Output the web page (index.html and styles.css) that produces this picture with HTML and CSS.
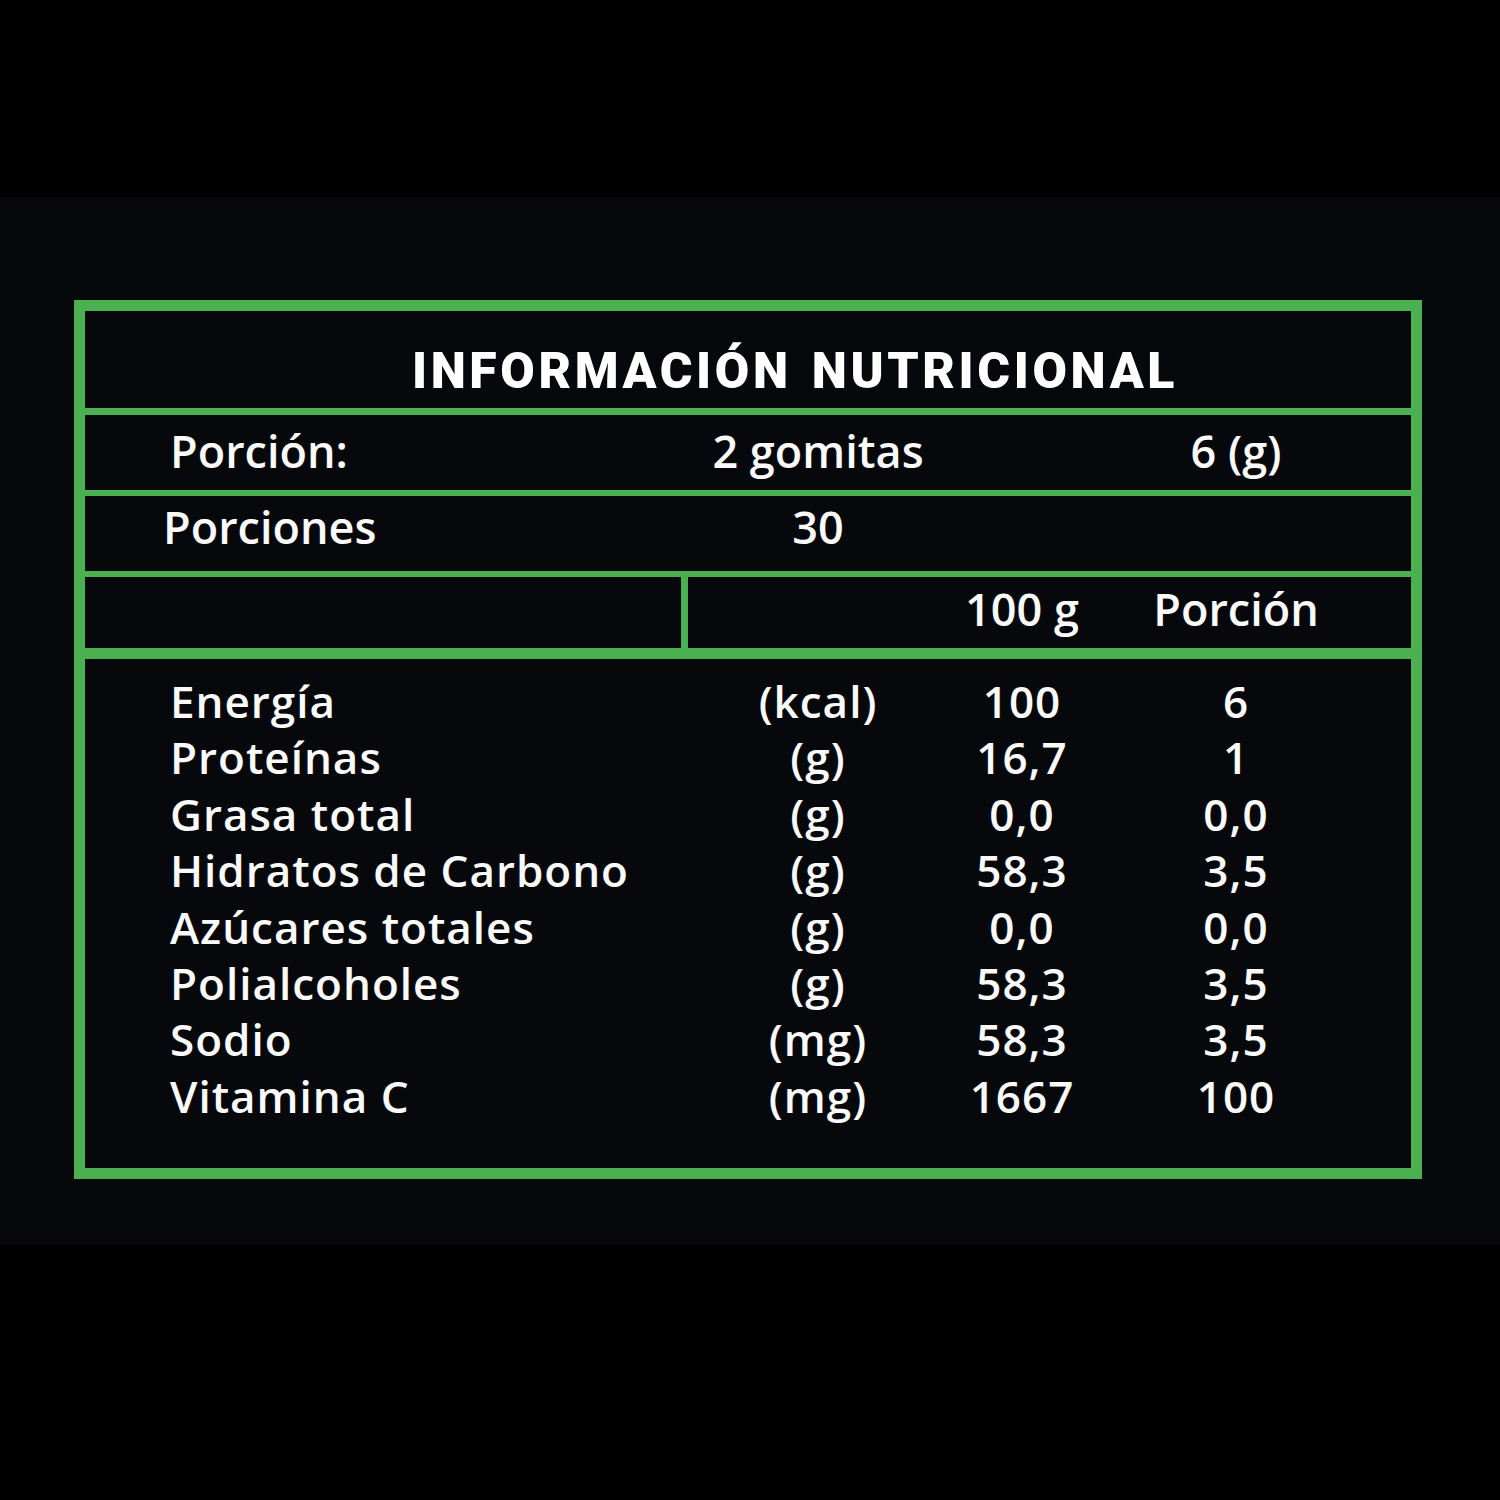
FILE: index.html
```html
<!DOCTYPE html>
<html lang="es">
<head>
<meta charset="utf-8">
<title>Información nutricional</title>
<link rel="stylesheet" href="styles.css">
</head>
<body>
<div class="page">
  <div class="panel">
    <div class="table">
      <div class="title-row"><h1 class="title">INFORMACIÓN NUTRICIONAL</h1></div>
      <div class="row row-portion">
        <span class="c-label">Porción:</span>
        <span class="c-unit">2 gomitas</span>
        <span class="c-100"></span>
        <span class="c-por">6 (g)</span>
      </div>
      <div class="row row-portions">
        <span class="c-label">Porciones</span>
        <span class="c-unit">30</span>
        <span class="c-100"></span>
        <span class="c-por"></span>
      </div>
      <div class="head-row">
        <span class="h-left"></span>
        <span class="h-line"></span>
        <span class="h-space"></span>
        <span class="h-100">100 g</span>
        <span class="h-por">Porción</span>
      </div>
      <div class="data">
        <div class="drow"><span class="c-label">Energía</span><span class="c-unit">(kcal)</span><span class="c-100">100</span><span class="c-por">6</span></div>
        <div class="drow"><span class="c-label">Proteínas</span><span class="c-unit">(g)</span><span class="c-100">16,7</span><span class="c-por">1</span></div>
        <div class="drow"><span class="c-label">Grasa total</span><span class="c-unit">(g)</span><span class="c-100">0,0</span><span class="c-por">0,0</span></div>
        <div class="drow"><span class="c-label">Hidratos de Carbono</span><span class="c-unit">(g)</span><span class="c-100">58,3</span><span class="c-por">3,5</span></div>
        <div class="drow"><span class="c-label">Azúcares totales</span><span class="c-unit">(g)</span><span class="c-100">0,0</span><span class="c-por">0,0</span></div>
        <div class="drow"><span class="c-label">Polialcoholes</span><span class="c-unit">(g)</span><span class="c-100">58,3</span><span class="c-por">3,5</span></div>
        <div class="drow"><span class="c-label">Sodio</span><span class="c-unit">(mg)</span><span class="c-100">58,3</span><span class="c-por">3,5</span></div>
        <div class="drow"><span class="c-label">Vitamina C</span><span class="c-unit">(mg)</span><span class="c-100">1667</span><span class="c-por">100</span></div>
      </div>
    </div>
  </div>
</div>
</body>
</html>
```

FILE: styles.css
```css
html, body {
  margin: 0;
  padding: 0;
  background: #000;
}

.page {
  width: 1500px;
  height: 1500px;
  padding-top: 197px;
  box-sizing: border-box;
  background: #000;
}

.panel {
  height: 1048px;
  background: #07080c;
  padding: 103px 78px 0 74px;
  box-sizing: border-box;
}

.table {
  height: 879px;
  border: 11px solid #4bb04f;
  box-sizing: border-box;
  display: flex;
  flex-direction: column;
  color: #fafafa;
  font-family: "Open Sans", "Noto Sans", sans-serif;
  font-weight: 600;
}

.title-row {
  height: 97px;
  border-bottom: 7px solid #4bb04f;
  display: flex;
  align-items: flex-end;
  justify-content: center;
  padding-left: 94px;
}

.title {
  margin: 0 0 7px 0;
  font-family: Roboto, "Liberation Sans", sans-serif;
  font-weight: 900;
  font-size: 50px;
  line-height: 60px;
  letter-spacing: 3.6px;
  word-spacing: 4px;
  color: #fff;
  white-space: nowrap;
}

.row, .drow {
  display: grid;
  grid-template-columns: 528px 240px 168px 260px 1fr;
  padding-left: 85px;
  align-items: center;
  white-space: nowrap;
}

.row {
  box-sizing: border-box;
  height: 81px;
  border-bottom: 6px solid #4bb04f;
  font-size: 45px;
  line-height: 56px;
}

.row-portion {
  padding-bottom: 3px;
}

.row-portions {
  padding-bottom: 14px;
}

.row-portions .c-label {
  margin-left: -7px;
}

.c-unit, .c-100, .c-por {
  display: flex;
  justify-content: center;
}

.head-row {
  height: 82px;
  box-sizing: border-box;
  border-bottom: 11px solid #4bb04f;
  display: grid;
  grid-template-columns: 596px 7px 250px 168px 260px 1fr;
  align-items: center;
  font-size: 45px;
  line-height: 56px;
  white-space: nowrap;
}

.h-line {
  align-self: stretch;
  background: #4bb04f;
}

.h-100, .h-por {
  display: flex;
  justify-content: center;
  padding-bottom: 8px;
}

.data {
  flex: 1;
  padding-top: 14px;
}

.drow {
  font-size: 44px;
  line-height: 56.4px;
  height: 56.4px;
  letter-spacing: 1px;
}
```
